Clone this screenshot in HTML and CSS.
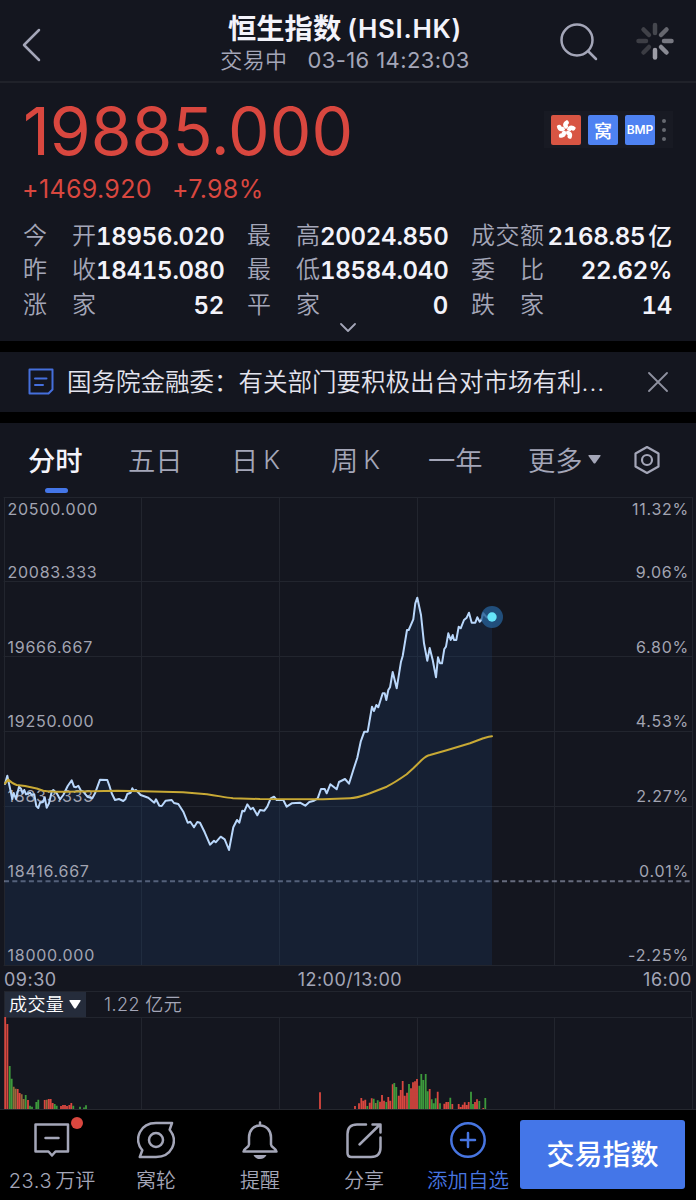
FILE: index.html
```html
<!DOCTYPE html>
<html lang="zh-CN">
<head>
  <meta charset="UTF-8">
  <meta name="viewport" content="width=device-width, initial-scale=1.0">
  <title>恒生指数 (HSI.HK)</title>
  <link rel="stylesheet" href="styles.css">
</head>
<body>
<header class="header">
  <svg class="back" width="20" height="34" viewBox="0 0 20 34"><path d="M18 2L3 17l15 15"/></svg>
  <div class="title">
    <h1>恒生指数<span>(HSI.HK)</span></h1>
    <p>交易中<span>03-16 14:23:03</span></p>
  </div>
  <svg class="search" width="40" height="40" viewBox="0 0 40 40"><circle cx="18" cy="18" r="15.5"/><path d="M29 29l8 8"/></svg>
  <svg class="spinner" width="38" height="38" viewBox="-19 -19 38 38">
    <path d="M0-8v-8" stroke="#45474e"/>
    <path d="M6-6l5.500-5.500" stroke="#66676f"/>
    <path d="M9 0h7.500" stroke="#777881"/>
    <path d="M6 6l5.500 5.500" stroke="#898a93"/>
    <path d="M0 9v7.500" stroke="#9d9da6"/>
    <path d="M-6 6l-5.500 5.500" stroke="#3b3c43"/>
    <path d="M-9 0h-7.500" stroke="#3d3e45"/>
    <path d="M-6-6l-5.500-5.500" stroke="#404148"/>
  </svg>
</header>

<section class="quote">
  <div class="price-row">
    <div class="price">19885.000</div>
    <div class="tags">
      <span class="tag tag-hk">
        <svg width="24" height="24" viewBox="-12 -12 24 24">
          <defs><path id="petal" d="M0-1C-4-3-4-8 1-10C4-8 3-6 1.500-5C3-4 2-2 0-1z"/></defs>
          <use href="#petal"/>
          <use href="#petal" transform="rotate(72)"/>
          <use href="#petal" transform="rotate(144)"/>
          <use href="#petal" transform="rotate(216)"/>
          <use href="#petal" transform="rotate(288)"/>
        </svg>
      </span>
      <span class="tag tag-wo">窝</span>
      <span class="tag tag-bmp">BMP</span>
      <span class="dots"><i></i><i></i><i></i></span>
    </div>
  </div>
  <div class="change"><span>+1469.920</span><span>+7.98%</span></div>
  <div class="stats">
    <div class="stat"><label><i>今</i><i>开</i></label><b>18956.020</b></div>
    <div class="stat"><label><i>最</i><i>高</i></label><b>20024.850</b></div>
    <div class="stat"><label><i>成</i><i>交</i><i>额</i></label><b>2168.85<em>亿</em></b></div>
    <div class="stat"><label><i>昨</i><i>收</i></label><b>18415.080</b></div>
    <div class="stat"><label><i>最</i><i>低</i></label><b>18584.040</b></div>
    <div class="stat"><label><i>委</i><i>比</i></label><b>22.62%</b></div>
    <div class="stat"><label><i>涨</i><i>家</i></label><b>52</b></div>
    <div class="stat"><label><i>平</i><i>家</i></label><b>0</b></div>
    <div class="stat"><label><i>跌</i><i>家</i></label><b>14</b></div>
  </div>
  <svg class="expand" width="16" height="10" viewBox="0 0 16 10"><path d="M1 1l7 7 7-7"/></svg>
</section>

<section class="news">
  <svg class="news-icon" width="26" height="28" viewBox="0 0 26 28"><path d="M1.500 1.500h23v20l-4 4H1.500zM7 10.500h11.500M7 17h8"/></svg>
  <p>国务院金融委：有关部门要积极出台对市场有利<span>...</span></p>
  <svg class="close" width="20" height="20" viewBox="0 0 20 20"><path d="M1 1l18 18M19 1L1 19"/></svg>
</section>

<nav class="tabs">
  <a class="tab active">分时</a>
  <a class="tab">五日</a>
  <a class="tab k">日<span>K</span></a>
  <a class="tab k">周<span>K</span></a>
  <a class="tab">一年</a>
  <a class="tab more">更多<svg width="13" height="9" viewBox="0 0 13 9"><path d="M1 0h11q1 0 .5 1L7.500 8q-1 1-2 0L.5 1Q0 0 1 0z"/></svg></a>
  <svg class="settings" width="28" height="30" viewBox="0 0 28 30"><path d="M14 2l11.500 6.500v13L14 28 2.500 21.500v-13z"/><circle cx="14" cy="15" r="5"/></svg>
</nav>

<section class="chart">
  <svg class="minute" width="696" height="469" viewBox="0 497 696 469">
    <path class="grid" d="M4 497.500H692M4 581.500H692M4 656.500H692M4 731.500H692M4 806.500H692M4 965.500H692M4.500 497V966M141.500 497V966M279.500 497V966M417.500 497V966M554.500 497V966M692.500 497V966"/>
    <path class="prev-close" d="M4 881.200H692"/>
    <path class="area" d="M5 965V784L7.300 775.700 12.300 799 13.700 793 16 799 19 786.700 21 788.700 22.700 793.300 24.300 790 26 794.300 30 792.700 31.700 795 34.300 794.300 36.300 806 38.300 808 40 802.700 43 802 44.700 797.300 46.700 807.700 49 803.300 51.700 791.700 53.300 790 56.700 793.300 60 799.300 63.300 795 67.700 786 71.700 780.300 74 786.700 76 787.300 78.300 785.700 81 790.700 83.300 791.700 87.300 796.700 92.300 798.300 95 793.300 100 779.700 107.300 780 109.700 786.700 111.700 793.300 115 800 119 799 123.300 801 125.300 799.300 127.300 794 130.700 792.700 132.300 788.300 134 791 136 790 140.700 795 148.300 797.700 154.300 802.700 156 799.300 159.300 805.700 161.700 806 165.700 800.700 171.700 800 174 803 178.300 804 183.300 811.700 187.700 822.700 190.300 821.700 194 827.300 197.300 822 200 822.700 204.700 832.300 210 844.700 214 840.700 215.700 842.300 220.700 836.700 224.700 839.300 229 850 233.300 827.300 237 820 239.300 822.700 242.300 810.700 244.300 811.300 247.300 804.300 250.700 809.300 253 807.700 257.300 815.300 260 810 264.300 810.700 267.300 806.700 270.700 798.300 274 796.700 276.700 800 283.300 800 286.700 806.700 291.700 803.300 300 802.700 305.300 805.700 309.300 802 314 800.700 317.700 798.300 321 789 324.700 789 326.700 793.300 330.300 784.300 336.700 789.300 339 782 345 779 349 783.700 353.300 770 357.300 757.700 360.700 741.700 364.300 731.700 367.700 731.700 372 706.700 374 711 376.300 705 378.300 707.300 382.700 693.300 384.700 693.300 386.300 700 388.300 690 390 687.300 392.700 672 396.700 688.300 401 661.700 402.700 656 407 630 408.700 630 413.300 619.300 415.300 603.300 417.300 597.700 421 615 424 643.300 427.300 660.700 429.700 648 432.700 660 436 677.300 438 657.300 440 663.300 442 663.300 444.300 649 446 646.700 448.300 633.300 450.700 640 452.700 635 454 640 456.300 640 458.700 626.700 460.700 628.300 464 620 466.700 617.700 469 612.700 471.700 622.700 475.300 622.700 477.300 617.300 479.700 621.700 481.300 620 483.300 613.300 486.700 617.300 492 616.700V965z"/>
    <g class="scale">
      <text x="7.500" y="515">20500.000</text>
      <text x="7.500" y="578">20083.333</text>
      <text x="7.500" y="653">19666.667</text>
      <text x="7.500" y="727">19250.000</text>
      <text x="7.500" y="802">18833.333</text>
      <text x="7.500" y="877">18416.667</text>
      <text x="7.500" y="961">18000.000</text>
    </g>
    <g class="scale right">
      <text x="689" y="515">11.32%</text>
      <text x="689" y="578">9.06%</text>
      <text x="689" y="653">6.80%</text>
      <text x="689" y="727">4.53%</text>
      <text x="689" y="802">2.27%</text>
      <text x="689" y="877">0.01%</text>
      <text x="689" y="961">-2.25%</text>
    </g>
    <path class="line" d="M5 784L7.300 775.700 12.300 799 13.700 793 16 799 19 786.700 21 788.700 22.700 793.300 24.300 790 26 794.300 30 792.700 31.700 795 34.300 794.300 36.300 806 38.300 808 40 802.700 43 802 44.700 797.300 46.700 807.700 49 803.300 51.700 791.700 53.300 790 56.700 793.300 60 799.300 63.300 795 67.700 786 71.700 780.300 74 786.700 76 787.300 78.300 785.700 81 790.700 83.300 791.700 87.300 796.700 92.300 798.300 95 793.300 100 779.700 107.300 780 109.700 786.700 111.700 793.300 115 800 119 799 123.300 801 125.300 799.300 127.300 794 130.700 792.700 132.300 788.300 134 791 136 790 140.700 795 148.300 797.700 154.300 802.700 156 799.300 159.300 805.700 161.700 806 165.700 800.700 171.700 800 174 803 178.300 804 183.300 811.700 187.700 822.700 190.300 821.700 194 827.300 197.300 822 200 822.700 204.700 832.300 210 844.700 214 840.700 215.700 842.300 220.700 836.700 224.700 839.300 229 850 233.300 827.300 237 820 239.300 822.700 242.300 810.700 244.300 811.300 247.300 804.300 250.700 809.300 253 807.700 257.300 815.300 260 810 264.300 810.700 267.300 806.700 270.700 798.300 274 796.700 276.700 800 283.300 800 286.700 806.700 291.700 803.300 300 802.700 305.300 805.700 309.300 802 314 800.700 317.700 798.300 321 789 324.700 789 326.700 793.300 330.300 784.300 336.700 789.300 339 782 345 779 349 783.700 353.300 770 357.300 757.700 360.700 741.700 364.300 731.700 367.700 731.700 372 706.700 374 711 376.300 705 378.300 707.300 382.700 693.300 384.700 693.300 386.300 700 388.300 690 390 687.300 392.700 672 396.700 688.300 401 661.700 402.700 656 407 630 408.700 630 413.300 619.300 415.300 603.300 417.300 597.700 421 615 424 643.300 427.300 660.700 429.700 648 432.700 660 436 677.300 438 657.300 440 663.300 442 663.300 444.300 649 446 646.700 448.300 633.300 450.700 640 452.700 635 454 640 456.300 640 458.700 626.700 460.700 628.300 464 620 466.700 617.700 469 612.700 471.700 622.700 475.300 622.700 477.300 617.300 479.700 621.700 481.300 620 483.300 613.300 486.700 617.300 492 616.700"/>
    <path class="average" d="M5 783.500L8.300 779.500C11 782 13 784 16.700 785L25 786 36.700 788.500 43.300 790.700C52 792 60 791.800 67 791.700L117 790.700 143 791.300 183 792.300 207 794.300C219 796 226 797.500 233 798.200L260 799 323 799.300 350 798.200C357 798 363 795.700 370 793.300L386.700 786.700C394 783 400 779 406.700 774.300L413.300 768.300 421.700 760C425 757 427 755.500 430 755L446.700 750.300 470 743.300 483.300 738.300C486 737.500 489 736.500 492 736.300"/>
    <circle class="halo" cx="492" cy="617" r="11"/>
    <circle class="now" cx="492" cy="617" r="4.700"/>
  </svg>
  <div class="times"><span>09:30</span><span>12:00/13:00</span><span>16:00</span></div>
  <div class="vol-head">
    <div class="vol-select">成交量<svg width="12" height="9" viewBox="0 0 12 9"><path d="M1 0h10q1 0 .5 1L7 8q-1 1-2 0L.5 1Q0 0 1 0z"/></svg></div>
    <span>1.22 亿元</span>
  </div>
  <svg class="volume" width="696" height="92" viewBox="0 1017 696 92">
    <path class="grid" d="M4 1017.500H692M4.500 1017V1109M141.500 1017V1109M279.500 1017V1109M417.500 1017V1109M554.500 1017V1109M692.500 1017V1109"/>
    <path class="up" d="M5.200 1109V1017M7.400 1109V1024M17.700 1109V1089M19.700 1109V1093M28 1109V1100M44.700 1109V1100M48.700 1109V1099M50.700 1109V1099M52.700 1109V1103M61 1109V1106M63 1109V1105M65 1109V1105M67 1109V1106M69.300 1109V1105M71.300 1109V1103M320 1109V1092.300M355 1109V1106M359 1109V1103.300M361.300 1109V1098M363.300 1109V1100.700M365.300 1109V1099.700M369.700 1109V1102.700M371.700 1109V1098.300M380 1109V1101.700M382 1109V1095M384 1109V1100.700M388.300 1109V1097M390.300 1109V1100.700M392.700 1109V1084.300M398.700 1109V1095.700M400.700 1109V1090M402.700 1109V1081M404.700 1109V1095.700M407 1109V1092.700M411 1109V1088.300M413 1109V1082.300M415 1109V1081.300M417 1109V1079M429.700 1109V1089M437.700 1109V1091.700M444.300 1109V1103.700M446.300 1109V1102M448.300 1109V1102M452.300 1109V1104M458.700 1109V1104M460.700 1109V1107M462.700 1109V1104.700M464.700 1109V1102.300M466.700 1109V1105M468.700 1109V1102M475 1109V1102M477 1109V1099.300M483.300 1109V1108"/>
    <path class="down" d="M9.700 1109V1066M11.700 1109V1078.700M25.700 1109V1095M30 1109V1105.700M32 1109V1106.700M36.300 1109V1102M38.300 1109V1099.700M54.700 1109V1104M56.700 1109V1105.700M73.300 1109V1105.700M80 1109V1106.700M84 1109V1107.500M86 1109V1105.300M367.300 1109V1106M373.700 1109V1098.700M377.700 1109V1100.300M386.300 1109V1102M394.300 1109V1083M396.300 1109V1087M409 1109V1084M419.300 1109V1085.700M421.300 1109V1074M423.300 1109V1080M425.700 1109V1074M427.700 1109V1091.300M431.700 1109V1099.300M433.700 1109V1103.300M435.700 1109V1098.300M440 1109V1103.300M450.300 1109V1097.700M471 1109V1091.700M473 1109V1104M479.300 1109V1101M485.300 1109V1098"/>
    <path class="flat" d="M13.700 1109V1086.700M15.700 1109V1088.700M21.700 1109V1094.300M23.700 1109V1099M46.700 1109V1099.700M375.700 1109V1103"/>
  </svg>
</section>

<footer class="bottom-bar">
  <a class="action comments">
    <svg width="38" height="38" viewBox="0 0 38 38"><path d="M2.500 3.500h32.500v27H22.500L19 34.500l-3.500-4H2.500zM12.500 17h13"/></svg>
    <i class="badge"></i>
    <span>23.3<em>万评</em></span>
  </a>
  <a class="action">
    <svg width="38" height="38" viewBox="0 0 38 38"><path d="M35 2H19C3.500 2-4 17.500 5.300 29.300L2.800 36H19C34.500 36 42 20.500 32.700 8.700z"/><circle cx="19" cy="19" r="7"/></svg>
    <span>窝轮</span>
  </a>
  <a class="action">
    <svg width="38" height="38" viewBox="0 0 38 38"><path d="M19 1.500v3M8 16.500C8 9.500 12.500 4.500 19 4.500s11 5 11 12v7c0 3 5.500 4 5.500 7h-33c0-3 5.500-4 5.500-7z"/><path class="fill" d="M12.500 34h13q-2 4-6.500 4t-6.500-4z"/></svg>
    <span>提醒</span>
  </a>
  <a class="action">
    <svg width="38" height="38" viewBox="0 0 38 38"><path d="M21 3.500H12Q2.500 3.500 2.500 13v19q0 4 4 4H26q9.500 0 9.500-9.500V16.500M14.500 23.500L34.500 4M27.500 3.500h8v8"/></svg>
    <span>分享</span>
  </a>
  <a class="action add">
    <svg width="38" height="38" viewBox="0 0 38 38"><circle cx="19" cy="19" r="16.700"/><path d="M19 12v14M12 19h14"/></svg>
    <span>添加自选</span>
  </a>
  <button class="trade">交易指数</button>
</footer>
</body>
</html>
```
FILE: styles.css
```css
* {
    box-sizing: border-box;
}
body {
    margin: 0;
    width: 696px;
    height: 1200px;
    overflow: hidden;
    background: #000;
    color: #a4a6b8;
    font-family: Inter, "Noto Sans CJK SC", sans-serif;
}
h1, p {
    margin: 0;
}
i, em {
    font-style: normal;
}
svg {
    display: block;
    flex: none;
    fill: none;
    stroke-linecap: round;
    stroke-linejoin: round;
}

/* header */
.header {
    display: flex;
    height: 83px;
    background: #14161f;
    border-bottom: 2px solid #20222a;
}
.back {
    margin: 28px 0 0 21px;
    stroke: #a4a6b8;
    stroke-width: 2.5;
}
.title {
    width: 300px;
    margin-left: 154px;
    padding-top: 10px;
    text-align: center;
}
.title h1 {
    display: flex;
    justify-content: center;
    gap: 6px;
    line-height: 38px;
    font-size: 28.3px;
    font-weight: 600;
    color: #f3f3fa;
}
.title h1 span {
    font-size: 26px;
    letter-spacing: .7px;
}
.title p {
    display: flex;
    justify-content: center;
    gap: 20px;
    line-height: 24px;
    font-size: 22px;
    letter-spacing: .4px;
    font-weight: 350;
}
.title p span {
    font-weight: 400;
}
.search {
    margin: 22px 0 0 64px;
    stroke: #a4a6b8;
    stroke-width: 2.5;
}
.spinner {
    margin: 22px 0 0 37px;
    stroke-width: 4.5;
}

/* quote */
.quote {
    height: 258px;
    padding: 0 23px;
    background: #14161f;
}
.price-row {
    display: flex;
    justify-content: space-between;
    height: 88px;
}
.price {
    line-height: 97px;
    font-size: 66px;
    color: #d9473f;
}
.tags {
    display: flex;
    align-items: center;
    gap: 7px;
    width: 129px;
    height: 37px;
    margin-top: 28px;
    padding-left: 7px;
    background: #181a23;
}
.tag {
    display: flex;
    align-items: center;
    justify-content: center;
    width: 30px;
    height: 30px;
    border-radius: 2px;
    background: #4e82f2;
    color: #fff;
    font-size: 18px;
    font-weight: 500;
}
.tag-hk {
    background: #d85543;
}
.tag-hk svg {
    fill: #fff;
}
.tag-bmp {
    font-size: 12px;
    font-weight: 600;
}
.dots {
    display: flex;
    flex-direction: column;
    gap: 5px;
}
.dots i {
    width: 4px;
    height: 4px;
    border-radius: 50%;
    background: #666870;
}
.change {
    display: flex;
    gap: 20px;
    margin-left: -1px;
    line-height: 36px;
    font-size: 25px;
    letter-spacing: .35px;
    color: #d9473f;
}
.stats {
    display: grid;
    grid-template-columns: repeat(3, 201px);
    column-gap: 23px;
    padding-top: 12px;
}
.stat {
    display: flex;
    justify-content: space-between;
    height: 34.3px;
    line-height: 35px;
    white-space: nowrap;
}
.stat label {
    display: flex;
    flex: none;
    justify-content: space-between;
    width: 73px;
    line-height: 34px;
    font-size: 24px;
    font-weight: 350;
}
.stat b {
    display: flex;
    font-size: 24px;
    font-weight: 600;
    font-variant-numeric: tabular-nums;
    letter-spacing: -.25px;
    color: #f3f3fa;
}
.stat em {
    font-weight: 500;
    margin-left: 3px;
}
.expand {
    margin: 1px auto 0;
    stroke: #a4a6b8;
    stroke-width: 1.8;
}

/* news */
.news {
    display: flex;
    align-items: center;
    height: 60px;
    margin: 11px 0;
    padding: 0 28px;
    background: #14161f;
}
.news-icon {
    stroke: #456fdc;
    stroke-width: 2;
}
.news p {
    width: 560px;
    margin-left: 13px;
    padding-bottom: 3px;
    font-size: 24.5px;
    white-space: nowrap;
    color: #e4e4ee;
    font-weight: 350;
}
.news p span {
    letter-spacing: 1px;
}
.close {
    margin-left: 21px;
    stroke: #8f91a0;
    stroke-width: 1.8;
}

/* tabs */
.tabs {
    display: flex;
    height: 74px;
    padding: 15px 0 0 28px;
    background: #14161f;
}
.tab {
    display: flex;
    align-items: center;
    position: relative;
    width: 100px;
    height: 42px;
    font-size: 27.3px;
    font-weight: 350;
    white-space: nowrap;
}
.tab.k {
    padding-left: 3px;
}
.tab span {
    margin-left: 5px;
    font-size: 26px;
}
.tab.active {
    color: #f3f3fa;
    font-weight: 500;
}
.tab.active::after {
    content: "";
    position: absolute;
    left: 17px;
    bottom: -13px;
    width: 23px;
    height: 5px;
    border-radius: 3px;
    background: #4476e8;
}
.tab.more {
    gap: 5px;
    width: 105px;
}
.more svg {
    fill: #a4a6b8;
}
.settings {
    margin: 7px 0 0 0;
    stroke: #a4a6b8;
    stroke-width: 2.2;
}

/* chart */
.chart {
    height: 612px;
    background: #14161f;
}
.grid {
    stroke: #22252e;
    stroke-width: 1;
}
.scale {
    fill: #a2a4b2;
    font-size: 16px;
    letter-spacing: .75px;
}
.right {
    text-anchor: end;
}
.prev-close {
    stroke: #666b7d;
    stroke-width: 2;
    stroke-dasharray: 5 3.3;
    stroke-linecap: butt;
}
.area {
    fill: rgba(31, 66, 116, .24);
}
.line {
    stroke: #b9d7fb;
    stroke-width: 2;
}
.average {
    stroke: #c8a935;
    stroke-width: 2;
}
.halo {
    fill: #245d92;
    opacity: .8;
}
.now {
    fill: #67e4fa;
}
.times {
    display: flex;
    justify-content: space-between;
    height: 25px;
    padding: 0 4px;
    line-height: 27px;
    font-size: 18px;
    letter-spacing: .5px;
}
.vol-head {
    display: flex;
    height: 26px;
    margin: 0 4px;
    border: 1px solid #22252e;
    border-bottom: 0;
    line-height: 25px;
    font-size: 18px;
    font-weight: 350;
    letter-spacing: .4px;
}
.vol-select {
    display: flex;
    align-items: center;
    gap: 5px;
    width: 81px;
    margin-right: 18px;
    padding-left: 4px;
    background: #252c3b;
    color: #fff;
}
.vol-select svg {
    fill: #fff;
}
.volume path {
    stroke-linecap: butt;
}
.volume .up {
    stroke: #d9473f;
    stroke-width: 1.8;
}
.volume .down {
    stroke: #3d9a3c;
    stroke-width: 1.8;
}
.volume .flat {
    stroke: #94693a;
    stroke-width: 1.8;
}

/* bottom bar */
.bottom-bar {
    display: flex;
    height: 91px;
    border-top: 1px solid #25272e;
    background: #000;
}
.action {
    display: flex;
    flex-direction: column;
    align-items: center;
    position: relative;
    width: 104px;
    padding-top: 11px;
    font-size: 20px;
    line-height: 28px;
    white-space: nowrap;
}
.action svg {
    margin-bottom: 8px;
    stroke: #a4a6b8;
    stroke-width: 2.5;
}
.action span {
    font-weight: 350;
}
.comments span {
    letter-spacing: .6px;
}
.comments em {
    margin-left: 3px;
    letter-spacing: 0;
}
.action .fill {
    fill: #a4a6b8;
    stroke: none;
}
.action .badge {
    position: absolute;
    left: 71px;
    top: 7px;
    width: 12px;
    height: 12px;
    border-radius: 50%;
    background: #d9473f;
}
.action.add {
    color: #4775e0;
}
.action.add svg {
    stroke: #4775e0;
}
.add span {
    font-size: 20.5px;
}
.trade {
    width: 165px;
    height: 69px;
    margin-top: 10px;
    padding: 0 0 3px;
    border: none;
    border-radius: 3px;
    background: #4476e8;
    color: #fff;
    font: 500 28px "Noto Sans CJK SC", sans-serif;
}
```
